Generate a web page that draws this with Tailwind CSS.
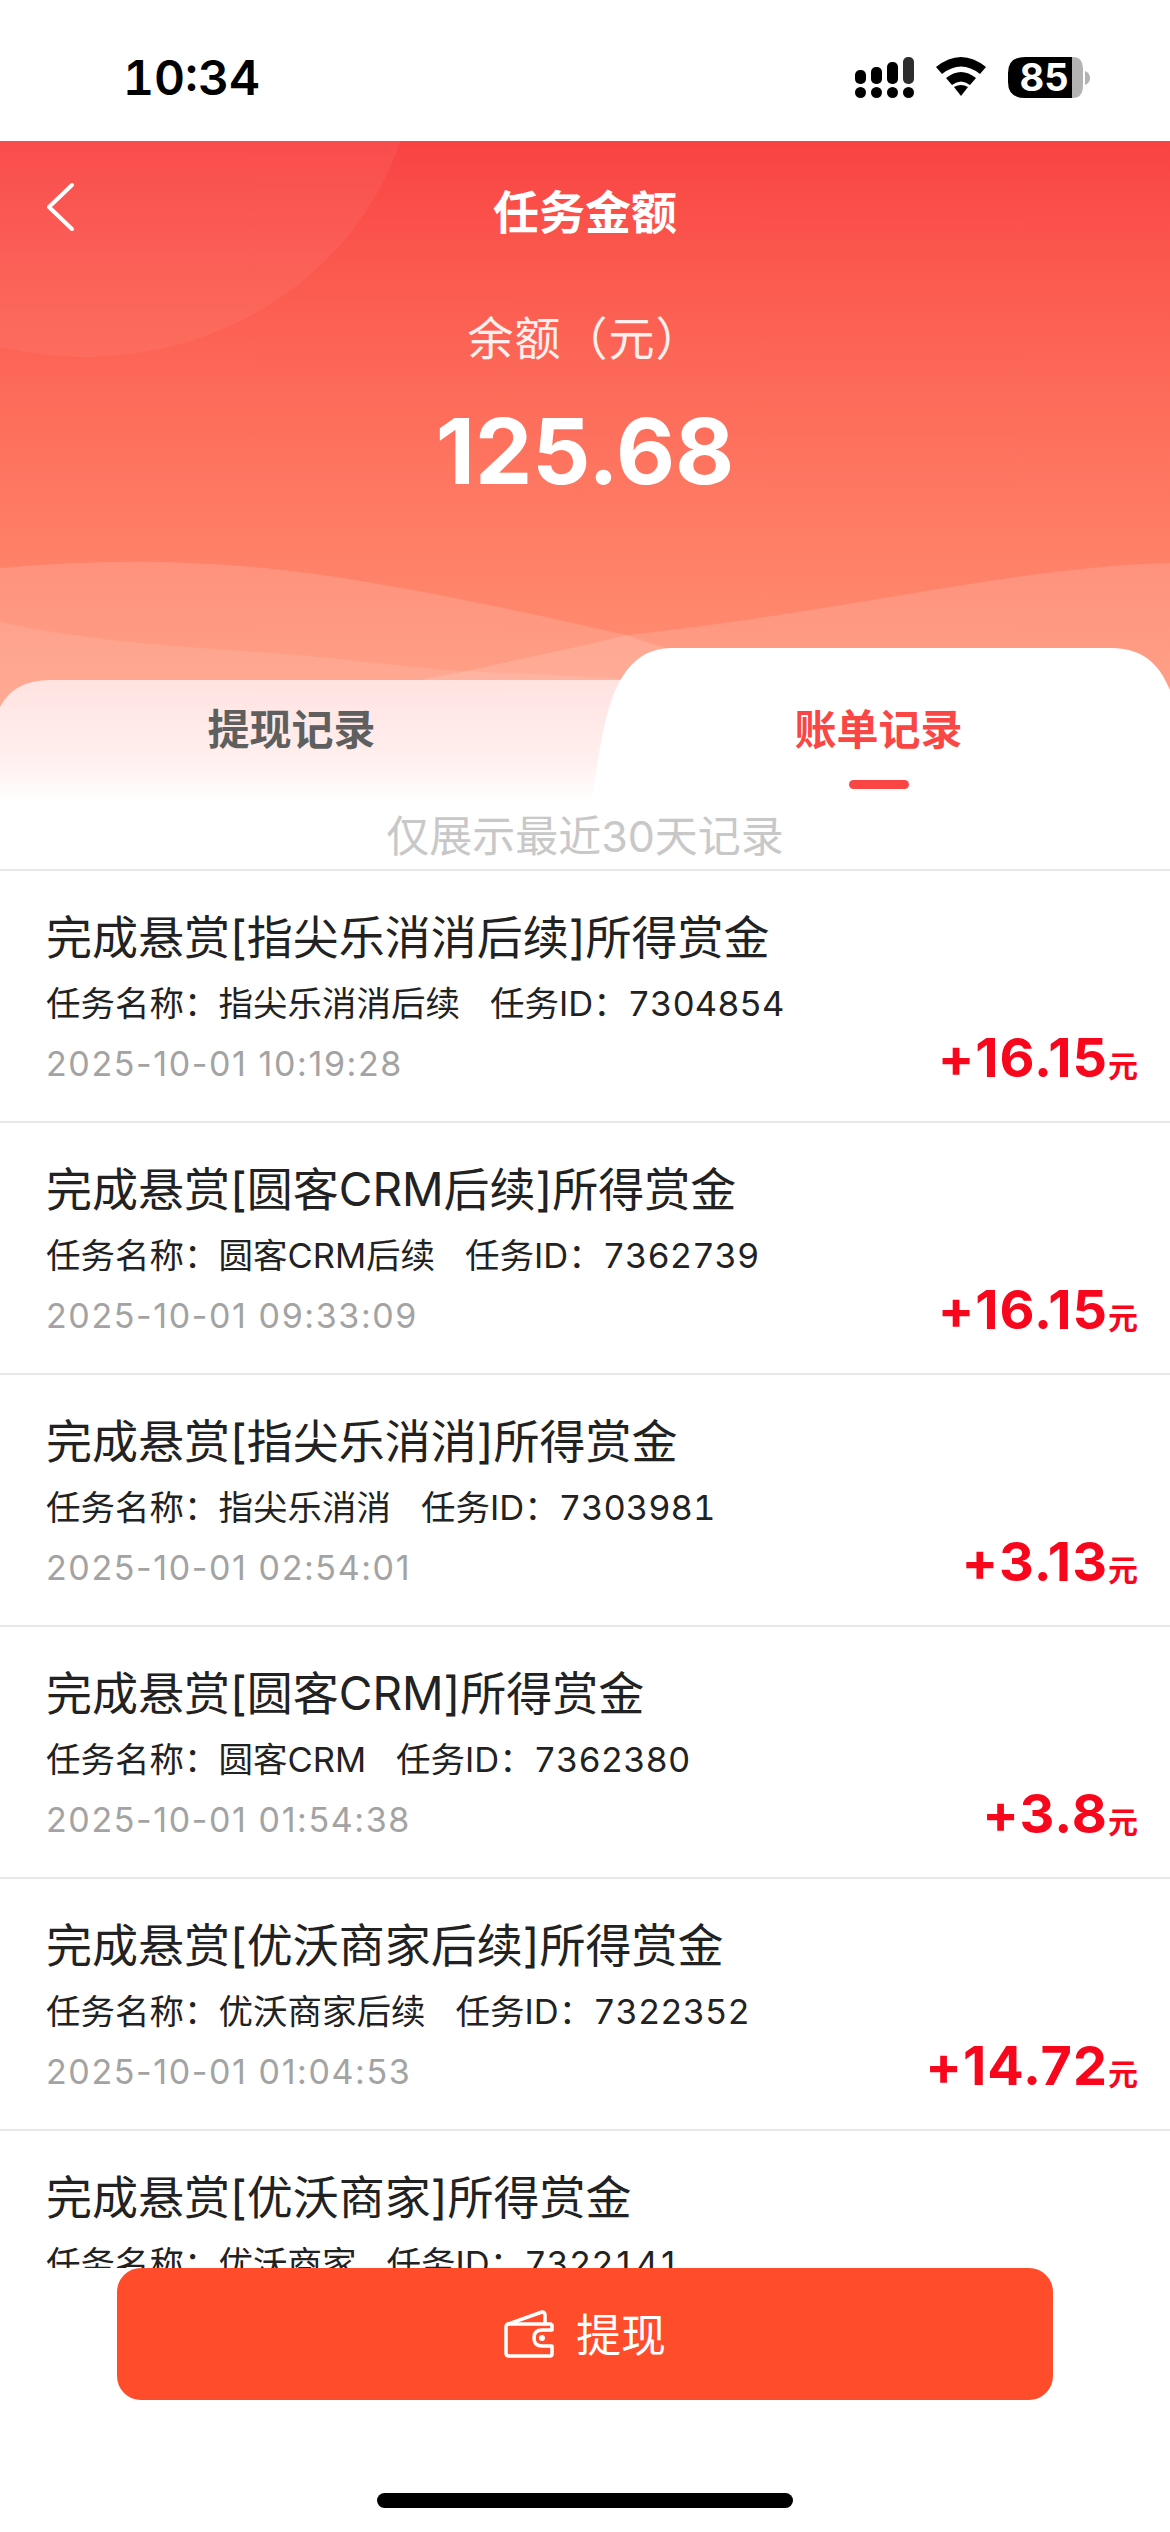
<!DOCTYPE html>
<html lang="zh-CN">
  <head>
    <meta charset="UTF-8" />
    <meta name="viewport" content="width=device-width, initial-scale=1.0" />
    <title>任务金额</title>
    <script src="https://cdn.jsdelivr.net/npm/@tailwindcss/browser@4"></script>
  </head>

  <body class="bg-white">
    <div class="w-[1170px] h-[2532px] flex flex-col overflow-hidden bg-white font-['Inter','Noto_Sans_CJK_SC',sans-serif]">
      <!-- status bar -->
      <div class="h-[141px] shrink-0 flex items-start justify-between">
        <div class="ml-[123px] mt-[48px] text-[48px] leading-[60px] font-semibold text-black tabular-nums">10:34</div>
        <svg class="mt-[50px] mr-[75px]" width="240" height="56" viewBox="856 50 240 56">
          <g fill="#000">
            <rect x="856" y="70" width="11" height="14" rx="5" />
            <rect x="872" y="67" width="11" height="17" rx="5" />
            <rect x="888" y="62" width="11" height="22" rx="5" />
            <rect x="904" y="57" width="11" height="27" rx="5" fill="#2e2e2e" />
            <circle cx="861.500" cy="92.500" r="5.500" />
            <circle cx="877.500" cy="92.500" r="5.500" />
            <circle cx="893.500" cy="92.500" r="5.500" />
            <circle cx="909.500" cy="92.500" r="5.500" />
            <path d="M937 67 Q962 47 987 67 L981 74 Q962 59 943 74 Z" />
            <path d="M947 78 Q962 66 977 78 L971 85 Q962 78 953 85 Z" />
            <path d="M955 87 Q962 83 969 87 L962 96 Z" />
            <path d="M1026 57 H1073 V98 H1026 Q1009 98 1009 82 V73 Q1009 57 1026 57 Z" />
          </g>
          <path d="M1073 57 H1074 Q1084 57 1084 70 V85 Q1084 98 1074 98 H1073 Z" fill="#b3b3b3" />
          <path d="M1086 71 Q1091 73 1091 78 Q1091 83 1086 85 Z" fill="#b3b3b3" />
          <text x="1045" y="91" text-anchor="middle" fill="#fff" font-size="38" font-weight="700" font-family="Inter">85</text>
        </svg>
      </div>

      <!-- balance header -->
      <div class="relative h-[566px] shrink-0 bg-linear-to-b from-[#f94343] to-[#ff9274] text-white text-center">
        <svg class="absolute inset-0" width="1170" height="566" viewBox="0 0 1170 566">
          <ellipse cx="85" cy="-90" rx="330" ry="306" fill="#fff" fill-opacity="0.05" />
          <path d="M0 427 C130 415 250 420 373 442 C450 455 520 470 627 494 C680 515 760 530 820 539 L820 566 L0 566 Z" fill="#fff" fill-opacity="0.14" />
          <path d="M1170 422 C1020 425 850 470 627 494 C560 510 490 525 420 539 L420 566 L1170 566 Z" fill="#fff" fill-opacity="0.14" />
          <path d="M0 481 C90 500 170 505 261 511 C330 516 390 524 448 529 C500 532 550 534 597 536 L640 539 L640 566 L0 566 Z" fill="#fff" fill-opacity="0.1" />
        </svg>
        <div class="relative">
          <div class="h-[140px] pt-[2px] flex items-center justify-center relative">
            <svg class="absolute left-[45px] top-[41px]" width="30" height="50" viewBox="0 0 30 50" fill="none" stroke="#fff" stroke-width="4" stroke-linecap="round" stroke-linejoin="round"><path d="M27 3 L4 25 L27 47" /></svg>
            <div class="text-[46px] leading-[60px] font-bold">任务金额</div>
          </div>
          <div class="mt-[27px] text-[46px] leading-[60px] tracking-[1px] text-white/90">余额（元）</div>
          <div class="mt-[28px] text-[91px] leading-[110px] font-bold">125.68</div>
        </div>
      </div>

      <!-- tabs -->
      <div class="relative h-[155px] -mt-[59px] shrink-0">
        <svg class="absolute inset-0" width="1170" height="155" viewBox="0 0 1170 155">
          <defs>
            <linearGradient id="leftTab" x1="0" y1="32" x2="0" y2="155" gradientUnits="userSpaceOnUse">
              <stop offset="0" stop-color="#ffe3e1" />
              <stop offset="0.6" stop-color="#ffeeed" />
              <stop offset="1" stop-color="#ffffff" />
            </linearGradient>
          </defs>
          <path d="M0 59 Q14 32 50 32 L640 32 L640 155 L0 155 Z" fill="url(#leftTab)" />
          <path d="M590 155 C603 110 600 0 672 0 L1110 0 C1150 0 1162 24 1170 42 L1170 155 Z" fill="#fff" />
        </svg>
        <div class="relative grid grid-cols-2 h-full text-[42px] leading-[56px] font-bold text-center">
          <div class="pt-[54px] pr-[2px] text-[#5f5f5f]">提现记录</div>
          <div class="pt-[54px] pl-[2px] text-[#fb4646] flex flex-col items-center">
            <span>账单记录</span>
            <span class="w-[60px] h-[9px] mt-[22px] rounded-full bg-[#fb4646]"></span>
          </div>
        </div>
      </div>

      <!-- notice -->
      <div class="h-[68px] shrink-0 flex items-center justify-center border-b-2 border-[#e8e8e8] text-[43px] text-[#c8c8c8]">仅展示最近30天记录</div>

      <!-- bill list -->
      <div class="flex-1 overflow-hidden">
        <div class="box-border h-[252px] pl-[46px] pr-[32px] pt-[34px] flex justify-between border-b-2 border-[#e8e8e8]">
          <div>
            <div class="text-[46px] leading-[64px] text-[#222]">完成悬赏[指尖乐消消后续]所得赏金</div>
            <div class="mt-[15px] text-[34.500px] leading-[40px] text-[#222] flex gap-[30px] tabular-nums"><span>任务名称：指尖乐消消后续</span><span>任务ID：7304854</span></div>
            <div class="mt-[20px] text-[34px] leading-[40px] tracking-[1.600px] text-[#a3a3a3]">2025-10-01 10:19:28</div>
          </div>
          <div class="self-end mb-[25px] text-[#f8061c] font-bold text-[54px] leading-[60px] tracking-[1px]">+16.15<span class="text-[30px] font-semibold tracking-normal">元</span></div>
        </div>
        <div class="box-border h-[252px] pl-[46px] pr-[32px] pt-[34px] flex justify-between border-b-2 border-[#e8e8e8]">
          <div>
            <div class="text-[46px] leading-[64px] text-[#222]">完成悬赏[圆客CRM后续]所得赏金</div>
            <div class="mt-[15px] text-[34.500px] leading-[40px] text-[#222] flex gap-[30px] tabular-nums"><span>任务名称：圆客CRM后续</span><span>任务ID：7362739</span></div>
            <div class="mt-[20px] text-[34px] leading-[40px] tracking-[1.600px] text-[#a3a3a3]">2025-10-01 09:33:09</div>
          </div>
          <div class="self-end mb-[25px] text-[#f8061c] font-bold text-[54px] leading-[60px] tracking-[1px]">+16.15<span class="text-[30px] font-semibold tracking-normal">元</span></div>
        </div>
        <div class="box-border h-[252px] pl-[46px] pr-[32px] pt-[34px] flex justify-between border-b-2 border-[#e8e8e8]">
          <div>
            <div class="text-[46px] leading-[64px] text-[#222]">完成悬赏[指尖乐消消]所得赏金</div>
            <div class="mt-[15px] text-[34.500px] leading-[40px] text-[#222] flex gap-[30px] tabular-nums"><span>任务名称：指尖乐消消</span><span>任务ID：7303981</span></div>
            <div class="mt-[20px] text-[34px] leading-[40px] tracking-[1.600px] text-[#a3a3a3]">2025-10-01 02:54:01</div>
          </div>
          <div class="self-end mb-[25px] text-[#f8061c] font-bold text-[54px] leading-[60px] tracking-[1px]">+3.13<span class="text-[30px] font-semibold tracking-normal">元</span></div>
        </div>
        <div class="box-border h-[252px] pl-[46px] pr-[32px] pt-[34px] flex justify-between border-b-2 border-[#e8e8e8]">
          <div>
            <div class="text-[46px] leading-[64px] text-[#222]">完成悬赏[圆客CRM]所得赏金</div>
            <div class="mt-[15px] text-[34.500px] leading-[40px] text-[#222] flex gap-[30px] tabular-nums"><span>任务名称：圆客CRM</span><span>任务ID：7362380</span></div>
            <div class="mt-[20px] text-[34px] leading-[40px] tracking-[1.600px] text-[#a3a3a3]">2025-10-01 01:54:38</div>
          </div>
          <div class="self-end mb-[25px] text-[#f8061c] font-bold text-[54px] leading-[60px] tracking-[1px]">+3.8<span class="text-[30px] font-semibold tracking-normal">元</span></div>
        </div>
        <div class="box-border h-[252px] pl-[46px] pr-[32px] pt-[34px] flex justify-between border-b-2 border-[#e8e8e8]">
          <div>
            <div class="text-[46px] leading-[64px] text-[#222]">完成悬赏[优沃商家后续]所得赏金</div>
            <div class="mt-[15px] text-[34.500px] leading-[40px] text-[#222] flex gap-[30px] tabular-nums"><span>任务名称：优沃商家后续</span><span>任务ID：7322352</span></div>
            <div class="mt-[20px] text-[34px] leading-[40px] tracking-[1.600px] text-[#a3a3a3]">2025-10-01 01:04:53</div>
          </div>
          <div class="self-end mb-[25px] text-[#f8061c] font-bold text-[54px] leading-[60px] tracking-[1px]">+14.72<span class="text-[30px] font-semibold tracking-normal">元</span></div>
        </div>
        <div class="box-border h-[252px] pl-[46px] pr-[32px] pt-[34px] flex justify-between">
          <div>
            <div class="text-[46px] leading-[64px] text-[#222]">完成悬赏[优沃商家]所得赏金</div>
            <div class="mt-[15px] text-[34.500px] leading-[40px] text-[#222] flex gap-[30px] tabular-nums"><span>任务名称：优沃商家</span><span>任务ID：7322141</span></div>
          </div>
        </div>
      </div>

      <!-- withdraw button + home bar -->
      <div class="h-[264px] shrink-0 bg-white flex flex-col items-center">
        <div class="w-[936px] h-[132px] rounded-[24px] bg-[#ff4c2b] flex items-center justify-center gap-[22px] text-white text-[45px]">
          <svg width="50" height="48" viewBox="0 0 50 48" fill="none" stroke="#fff" stroke-width="3.500" stroke-linejoin="round" stroke-linecap="round">
            <path d="M47 14 H5 Q2 14 2 17 V43 Q2 46 5 46 H46 Q48 46 48 44 V36 H38 Q30 36 30 28 Q30 20 38 20 H48 V15" />
            <path d="M4 14 L38 2 Q41 2 41 5 V14" />
            <circle cx="38" cy="28" r="3" fill="#fff" stroke="none" />
          </svg>
          <span class="pt-[4px]">提现</span>
        </div>
        <div class="w-[416px] h-[15px] mt-[93px] rounded-full bg-black"></div>
      </div>
    </div>
  </body>
</html>
